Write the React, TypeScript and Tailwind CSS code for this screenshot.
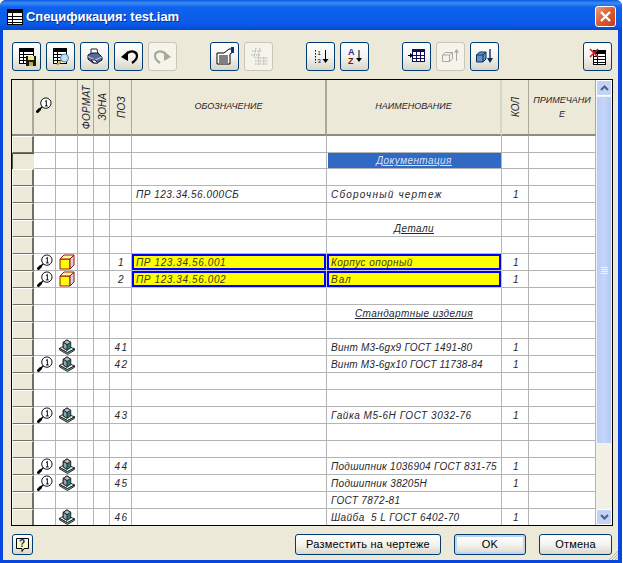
import type { ReactNode } from 'react';

const GRID = 'grid grid-cols-[22px_22px_22px_16px_16px_22px_195px_175px_27px_67px]';
const FONT = "font-['Liberation_Sans',sans-serif]";

type Row = {
  mark?: boolean;
  icon?: 'cube' | 'part';
  pos?: string;
  code?: string;
  name?: string;
  qty?: string;
  title?: string;
  selected?: boolean;
  hot?: boolean;
  track?: string;
};

const rows: Row[] = [
  {},
  { title: 'Документация', selected: true },
  {},
  { code: 'ПР 123.34.56.000СБ', name: 'Сборочный чертеж', qty: '1', track: 'tracking-[1.2px]' },
  {},
  { title: 'Детали' },
  {},
  { mark: true, icon: 'cube', pos: '1', code: 'ПР 123.34.56.001', name: 'Корпус опорный', qty: '1', hot: true },
  { mark: true, icon: 'cube', pos: '2', code: 'ПР 123.34.56.002', name: 'Вал', qty: '1', hot: true, track: 'tracking-[1px]' },
  {},
  { title: 'Стандартные изделия' },
  {},
  { icon: 'part', pos: '41', name: 'Винт М3-6gx9 ГОСТ 1491-80', qty: '1', track: 'tracking-[0.22px]' },
  { mark: true, icon: 'part', pos: '42', name: 'Винт М3-6gx10 ГОСТ 11738-84', qty: '1', track: 'tracking-[0.2px]' },
  {},
  {},
  { mark: true, icon: 'part', pos: '43', name: 'Гайка М5-6Н ГОСТ 3032-76', qty: '1', track: 'tracking-[0.55px]' },
  {},
  {},
  { mark: true, icon: 'part', pos: '44', name: 'Подшипник 1036904 ГОСТ 831-75', qty: '1', track: 'tracking-[0.28px]' },
  { mark: true, icon: 'part', pos: '45', name: 'Подшипник 38205Н', qty: '1', track: 'tracking-[0.3px]' },
  { name: 'ГОСТ 7872-81', track: 'tracking-[0.33px]' },
  { icon: 'part', pos: '46', name: 'Шайба  5 L ГОСТ 6402-70', qty: '1', track: 'tracking-[0.42px]' },
];

function Magnifier() {
  return (
    <svg width="16" height="16" viewBox="0 0 17 17">
      <path d="M1 16 L7 10" stroke="#000" strokeWidth="1.5" />
      <path d="M0.5 16.5 L4.5 12.5" stroke="#000" strokeWidth="3" />
      <circle cx="10.5" cy="6.5" r="5.5" fill="#fff" stroke="#000" />
      <path d="M9.5 5 L11 3.6 V9.5 M9.5 9.5 H12.5" fill="none" stroke="#000" />
    </svg>
  );
}

function Cube() {
  return (
    <svg width="16" height="16" viewBox="0 0 16 16">
      <path d="M1 5 H11 V15 H1 Z" fill="#ffff00" stroke="#9c1010" />
      <path d="M1 5 H11 L15 1 H5 Z" fill="#fff8a0" stroke="#9c1010" />
      <path d="M11 5 L15 1 V11 L11 15 Z" fill="#d4d4dc" stroke="#9c1010" />
    </svg>
  );
}

function Part() {
  return (
    <svg width="16" height="16" viewBox="0 0 17 17">
      <path d="M0.5 10 L7 6.5 L16.5 10.5 L9 14.5 Z" fill="#e4ecec" stroke="#222" />
      <path d="M0.5 10 V11.5 L9 16.5 L16.5 12 V10.5 L9 14.5 Z" fill="#6fb5ae" stroke="#222" />
      <path d="M4.5 3.5 L8.5 1 L12.5 3.5 V9.5 L8.5 12 L4.5 9.5 Z" fill="#1c8083" stroke="#222" />
      <path d="M4.5 3.5 L8.5 1 L12.5 3.5 L8.5 6 Z" fill="#b9bcc6" stroke="#222" />
      <path d="M4.5 3.5 L8.5 6 V12 L4.5 9.5 Z" fill="#8fa6aa" stroke="#222" />
    </svg>
  );
}

function Cell({ className = '', children }: { className?: string; children?: ReactNode }) {
  return <div className={`flex items-center overflow-hidden border-r border-r-[#b4b4b4] ${className}`}>{children}</div>;
}

function HotCell({ children, track = '' }: { children?: ReactNode; track?: string }) {
  return (
    <div className="overflow-hidden border-r border-b border-[#c8c8c8]">
      <div className={`flex h-full items-center whitespace-pre border-2 border-[#0000ff] bg-[#ffff00] pl-[2px] leading-[11px] text-[#3a3a10] ${track}`}>
        {children}
      </div>
    </div>
  );
}

function TableRow({ row, last, short }: { row: Row; last: boolean; short: boolean }) {
  const line = last ? '' : 'border-b border-b-[#b4b4b4]';
  const height = last || short ? 'h-4' : 'h-[17px]';
  const textCell = `whitespace-pre pl-1 ${line}`;
  return (
    <div className={`${GRID} grid-rows-[1fr] ${height} bg-white text-[10px] tracking-[0.3px] italic text-[#26262e]`}>
      <div
        className={
          row.selected
            ? 'border-t border-l border-t-[#55534a] border-l-[#55534a] bg-[#ece9d8]'
            : `border-t border-l border-t-white border-l-white border-r-2 border-r-[#716f64] bg-[#ece9d8] ${last ? '' : 'border-b border-b-[#716f64]'}`
        }
      />
      <Cell className={`justify-center ${line}`}>{row.mark && <Magnifier />}</Cell>
      <Cell className={`justify-center ${line}`}>
        {row.icon === 'cube' && <Cube />}
        {row.icon === 'part' && <Part />}
      </Cell>
      <Cell className={line} />
      <Cell className={line} />
      <Cell className={`justify-center pl-[2px] tracking-[1.4px] ${line}`}>{row.pos}</Cell>
      {row.hot ? (
        <HotCell track="tracking-[0.6px]">{row.code}</HotCell>
      ) : (
        <Cell className={`tracking-[0.5px] ${textCell}`}>{row.code}</Cell>
      )}
      {row.title ? (
        <Cell className={`justify-center tracking-[0.42px] ${line}`}>
          <span
            className={
              row.selected
                ? 'flex h-[15px] w-[173px] items-center justify-center bg-[#316ac5] text-[#dce4f0] underline'
                : 'underline'
            }
          >
            {row.title}
          </span>
        </Cell>
      ) : row.hot ? (
        <HotCell track={row.track ?? 'tracking-[0.42px]'}>{row.name}</HotCell>
      ) : (
        <Cell className={`${textCell} ${row.track ?? ''}`}>{row.name}</Cell>
      )}
      <Cell className={`justify-center pl-[2px] ${line}`}>{row.qty}</Cell>
      <Cell className={line} />
    </div>
  );
}

function HeaderCell({ children, className = '' }: { children?: ReactNode; className?: string }) {
  return (
    <div className={`flex items-center justify-center border-b-2 border-b-[#8f8c7c] border-r border-r-[#aca899] bg-[#ece9d8] ${className}`}>
      {children}
    </div>
  );
}

function Vertical({ text, className = '' }: { text: string; className?: string }) {
  return <span className={`rotate-180 text-[10px] [writing-mode:vertical-rl] ${className}`}>{text}</span>;
}

function ToolButton({ off, children }: { off?: boolean; children: ReactNode }) {
  return (
    <button
      className={
        off
          ? 'flex h-[29px] w-[29px] items-center justify-center rounded-[3px] border border-[#c9c7ba] bg-[#f5f4ea]'
          : 'flex h-[29px] w-[29px] items-center justify-center rounded-[3px] border border-[#003c74] bg-gradient-to-b from-white via-[#f4f3ee] to-[#d9d5c8]'
      }
    >
      {children}
    </button>
  );
}

function Sheet({ x = 0, y = 0, w = 15, h = 17, c = '#000' }: { x?: number; y?: number; w?: number; h?: number; c?: string }) {
  const lines = [];
  for (let ly = y + 3; ly < y + h; ly += 3) lines.push(<path key={ly} d={`M${x} ${ly + 0.5} H${x + w}`} stroke={c} />);
  return (
    <g>
      <rect x={x + 0.5} y={y + 0.5} width={w - 1} height={h - 1} fill="#fff" stroke={c} />
      <rect x={x} y={y} width={w} height="3" fill={c} />
      {lines}
      <path d={`M${x + 4.5} ${y} V${y + h}`} stroke={c} />
    </g>
  );
}

function DialogButton({ children, className = '' }: { children: ReactNode; className?: string }) {
  return (
    <button
      className={`flex h-[21px] items-center justify-center rounded-[3px] border border-[#003c74] bg-gradient-to-b from-white via-[#f4f3ee] to-[#dcd8cc] text-[11px] tracking-[0.2px] text-black ${className}`}
    >
      {children}
    </button>
  );
}

export default function App() {
  return (
    <div className="h-[563px] w-[623px] bg-white">
      <div className={`flex h-[563px] w-[622px] flex-col overflow-hidden rounded-t-[6px] bg-[#0847dd] ${FONT}`}>
        <div className="flex h-[30px] shrink-0 items-center bg-[linear-gradient(to_bottom,#0a58e0_0px,#3a8cf4_3px,#0f62ee_7px,#0a5ce8_24px,#0448d4_30px)] pl-[7px] pr-[6px] pt-[3px]">
          <svg width="16" height="16" viewBox="0 0 16 16">
            <rect x="0.5" y="0.5" width="15" height="15" fill="#fff" stroke="#000" />
            <rect x="0" y="0" width="16" height="4" fill="#000" />
            <path d="M0 7.5 H16 M0 10.5 H16 M0 13.5 H16 M5.5 0 V16" stroke="#000" />
          </svg>
          <span className="ml-[3px] text-[13px] font-bold tracking-[-0.05px] text-white [text-shadow:1px_1px_0_#0a2f9c]">
            Спецификация: test.iam
          </span>
          <div className="ml-auto flex h-[21px] w-[21px] items-center justify-center rounded-[3px] border border-white bg-gradient-to-br from-[#f09a7c] via-[#dd5a30] to-[#c43c14]">
            <svg width="13" height="13" viewBox="0 0 13 13">
              <path d="M2 2 L11 11 M11 2 L2 11" stroke="#fff" strokeWidth="2.4" />
            </svg>
          </div>
        </div>

        <div className="relative ml-[3px] mr-[4px] mb-[3px] flex min-h-0 flex-1 flex-col bg-[#ece9d8] pl-2 pr-[5px]">
          <div className="mt-3 flex pl-px pr-px">
            <div className="flex gap-[5px]">
              <ToolButton>
                <svg width="22" height="22" viewBox="0 0 22 22">
                  <Sheet x={3} y={2} w={15} h={16} />
                  <rect x="10" y="10" width="10" height="10" fill="#1a1a10" />
                  <rect x="12" y="10" width="6" height="4" fill="#f2e88a" />
                  <rect x="13" y="16" width="4" height="4" fill="#b8b040" />
                </svg>
              </ToolButton>
              <ToolButton>
                <svg width="22" height="22" viewBox="0 0 22 22">
                  <Sheet x={3} y={2} w={14} h={16} />
                  <path d="M7 19 L11 15" stroke="#d9a441" strokeWidth="2" />
                  <circle cx="14.5" cy="12" r="4" fill="#bfe3f5" stroke="#4a7fa8" />
                </svg>
              </ToolButton>
              <ToolButton>
                <svg width="22" height="22" viewBox="0 0 22 22">
                  <path d="M7 3 H13 L14 8 H7 Z" fill="#fff" stroke="#222" />
                  <path d="M4 9 L8 7 H14 L18 11 V14 L13 17 H9 L4 13 Z" fill="#5b6a9c" stroke="#10103a" />
                  <path d="M4 10.5 L11 14 L18 11" fill="none" stroke="#c8d0e8" />
                  <path d="M7 14 L10 17 H14 L11 14 Z" fill="#fff" stroke="#222" />
                </svg>
              </ToolButton>
              <ToolButton>
                <svg width="22" height="22" viewBox="0 0 22 22">
                  <path d="M9 7.5 C13 4 19 5 19 10 C19 13 17 15 14 17" fill="none" stroke="#000" strokeWidth="2.2" />
                  <path d="M3 11 L10 5 V15 Z" fill="#000" />
                </svg>
              </ToolButton>
              <ToolButton off>
                <svg width="22" height="22" viewBox="0 0 22 22">
                  <path d="M13 7.5 C9 4 3 5 3 10 C3 13 5 15 8 17" fill="none" stroke="#a9a89c" strokeWidth="2.2" />
                  <path d="M19 11 L12 5 V15 Z" fill="#a9a89c" />
                </svg>
              </ToolButton>
            </div>
            <div className="ml-[33px] flex gap-[5px]">
              <ToolButton>
                <svg width="22" height="22" viewBox="0 0 22 22">
                  <path d="M3 7 H10 L15 3 H19 V6 L16 8 V18 H3 Z" fill="#fff" stroke="#000" />
                  <path d="M5 10 H14 M5 12 H14 M5 14 H14 M5 16 H14" stroke="#000" />
                  <rect x="17" y="1" width="3" height="6" fill="#1a2a80" />
                </svg>
              </ToolButton>
              <ToolButton off>
                <svg width="22" height="22" viewBox="0 0 22 22">
                  <path d="M8 2 L6 11 M12 2 L10 11 M4 5 H14 M3 9 H13 M7 12 H20 M7 15 H20 M7 18 H20 M11 11 V19 M16 11 V19" stroke="#b2b0a4" strokeDasharray="1.5 1" />
                </svg>
              </ToolButton>
            </div>
            <div className="ml-[33px] flex gap-[5px]">
              <ToolButton>
                <svg width="22" height="22" viewBox="0 0 22 22">
                  <path d="M5.5 4 V5.5 M5.5 7 V8.5 M5.5 10 V11.5 M5.5 13 V14.5 M5.5 16 V17" stroke="#000" />
                  <text x="7.5" y="9" fontSize="6" fill="#000" fontFamily="Liberation Sans">1</text>
                  <text x="7.5" y="17" fontSize="6" fill="#000" fontFamily="Liberation Sans">3</text>
                  <path d="M15.5 4 V14" stroke="#000" />
                  <path d="M12.5 13 H18.5 L15.5 17 Z" fill="#000" />
                </svg>
              </ToolButton>
              <ToolButton>
                <svg width="22" height="22" viewBox="0 0 22 22">
                  <text x="4" y="9" fontSize="9" fontWeight="700" fill="#2a2a9a" fontFamily="Liberation Sans">A</text>
                  <text x="4" y="18" fontSize="9" fontWeight="700" fill="#7a1a1a" fontFamily="Liberation Sans">Z</text>
                  <path d="M15 4 V13" stroke="#000" />
                  <path d="M12 12 H18 L15 16 Z" fill="#000" />
                </svg>
              </ToolButton>
            </div>
            <div className="ml-[33px] flex gap-[5px]">
              <ToolButton>
                <svg width="22" height="22" viewBox="0 0 22 22">
                  <rect x="6.5" y="3.5" width="12" height="12" fill="#fff" stroke="#10105a" />
                  <rect x="6" y="3" width="13" height="3" fill="#10105a" />
                  <path d="M7 9.5 H18 M7 12.5 H18 M10.5 4 V15 M14.5 4 V15" stroke="#10105a" />
                  <path d="M2 9.5 H5" stroke="#000" />
                  <path d="M4 7 L7 9.5 L4 12 Z" fill="#000" />
                </svg>
              </ToolButton>
              <ToolButton off>
                <svg width="22" height="22" viewBox="0 0 22 22">
                  <path d="M2.5 9 L5.5 6.5 H12.5 V13 L9.5 15.5 H2.5 Z M2.5 9 H9.5 V15.5 M9.5 9 L12.5 6.5" fill="none" stroke="#aaa89c" />
                  <path d="M16.5 15 V5" stroke="#aaa89c" />
                  <path d="M14 6.5 H19 L16.5 3 Z" fill="#aaa89c" />
                </svg>
              </ToolButton>
              <ToolButton>
                <svg width="22" height="22" viewBox="0 0 22 22">
                  <path d="M2.5 9 L5.5 6 H12 V13 L9 16 H2.5 Z" fill="#5f94c8" stroke="#10305a" />
                  <path d="M2.5 9 H9 V16 M9 9 L12 6" fill="none" stroke="#10305a" />
                  <path d="M16 3 V13" stroke="#10305a" strokeWidth="1.4" />
                  <path d="M13 12 H19 L16 17 Z" fill="#10305a" />
                </svg>
              </ToolButton>
            </div>
            <div className="ml-auto">
              <ToolButton>
                <svg width="22" height="22" viewBox="0 0 22 22">
                  <Sheet x={6} y={4} w={13} h={15} />
                  <path d="M3 3 L11 11 M11 3 L3 11" stroke="#d42020" strokeWidth="1.6" />
                </svg>
              </ToolButton>
            </div>
          </div>

          <div className="mt-2 flex h-[447px] shrink-0 border border-black bg-white">
            <div className="w-[584px]">
              <div className={`${GRID} h-[56px] text-[9px] italic text-[#26262e]`}>
                <HeaderCell className="border-r-2 border-r-[#716f64]" />
                <HeaderCell>
                  <span className="mr-[2px] mt-[-4px]"><Magnifier /></span>
                </HeaderCell>
                <HeaderCell />
                <HeaderCell><Vertical text="ФОРМАТ" className="ml-[2px] tracking-[0.3px]" /></HeaderCell>
                <HeaderCell><Vertical text="ЗОНА" className="ml-[2px]" /></HeaderCell>
                <HeaderCell><Vertical text="ПОЗ" className="ml-[2px] tracking-[0.3px]" /></HeaderCell>
                <HeaderCell className="border-r-2 border-r-[#716f64]">ОБОЗНАЧЕНИЕ</HeaderCell>
                <HeaderCell className="border-r-2 border-r-[#d8d6c8]">НАИМЕНОВАНИЕ</HeaderCell>
                <HeaderCell><Vertical text="КОЛ" /></HeaderCell>
                <HeaderCell className="border-r-[#716f64] text-center leading-[14px]">ПРИМЕЧАНИ<br />Е</HeaderCell>
              </div>
              {rows.map((row, i) => (
                <TableRow key={i} row={row} last={i === rows.length - 1} short={i === 1} />
              ))}
            </div>

            <div className="flex w-4 flex-col bg-[#f3f1e6]">
              <div className="flex h-[16px] items-center justify-center rounded-[2px] border border-white bg-[#c3d3f8]">
                <svg width="9" height="6" viewBox="0 0 9 6"><path d="M1 5 L4.5 1.5 L8 5" fill="none" stroke="#4d6185" strokeWidth="2" /></svg>
              </div>
              <div className="flex h-[348px] items-center justify-center rounded-[2px] border border-[#eef2fd] bg-gradient-to-r from-[#b9cdf7] via-[#c6d6fa] to-[#b4c8f4]">
                <div className="flex w-[7px] flex-col gap-px">
                  <div className="h-px bg-[#eef3fe]" />
                  <div className="h-px bg-[#eef3fe]" />
                  <div className="h-px bg-[#eef3fe]" />
                  <div className="h-px bg-[#eef3fe]" />
                </div>
              </div>
              <div className="flex-1" />
              <div className="flex h-[16px] items-center justify-center rounded-[2px] border border-white bg-[#c3d3f8]">
                <svg width="9" height="6" viewBox="0 0 9 6"><path d="M1 1 L4.5 4.5 L8 1" fill="none" stroke="#4d6185" strokeWidth="2" /></svg>
              </div>
            </div>
          </div>

          <div className="mt-2 flex pl-px">
            <button className="flex h-[21px] w-[21px] items-center justify-center rounded-[3px] border border-[#003c74] bg-gradient-to-b from-white to-[#dcd8cc]">
              <svg width="15" height="16" viewBox="0 0 15 16">
                <path d="M1.5 1.5 H13.5 V11.5 H9 L7 14.5 V11.5 H1.5 Z" fill="#fff8b0" stroke="#000" />
                <text x="4" y="10" fontSize="10" fontWeight="700" fill="#1a1aa0" fontFamily="Liberation Sans">?</text>
              </svg>
            </button>
            <DialogButton className="ml-[262px] w-[146px]">Разместить на чертеже</DialogButton>
            <DialogButton className="ml-[13px] w-[72px] border-[#2a4f9c] shadow-[inset_0_0_0_2px_#c2d4f0]">OK</DialogButton>
            <DialogButton className="ml-[13px] w-[73px]">Отмена</DialogButton>
          </div>

          <svg className="absolute bottom-0 right-0" width="10" height="10" viewBox="0 0 10 10">
            <path d="M1 10 L10 1 M4 10 L10 4 M7 10 L10 7" stroke="#b5b2a0" />
          </svg>
        </div>
      </div>
    </div>
  );
}
